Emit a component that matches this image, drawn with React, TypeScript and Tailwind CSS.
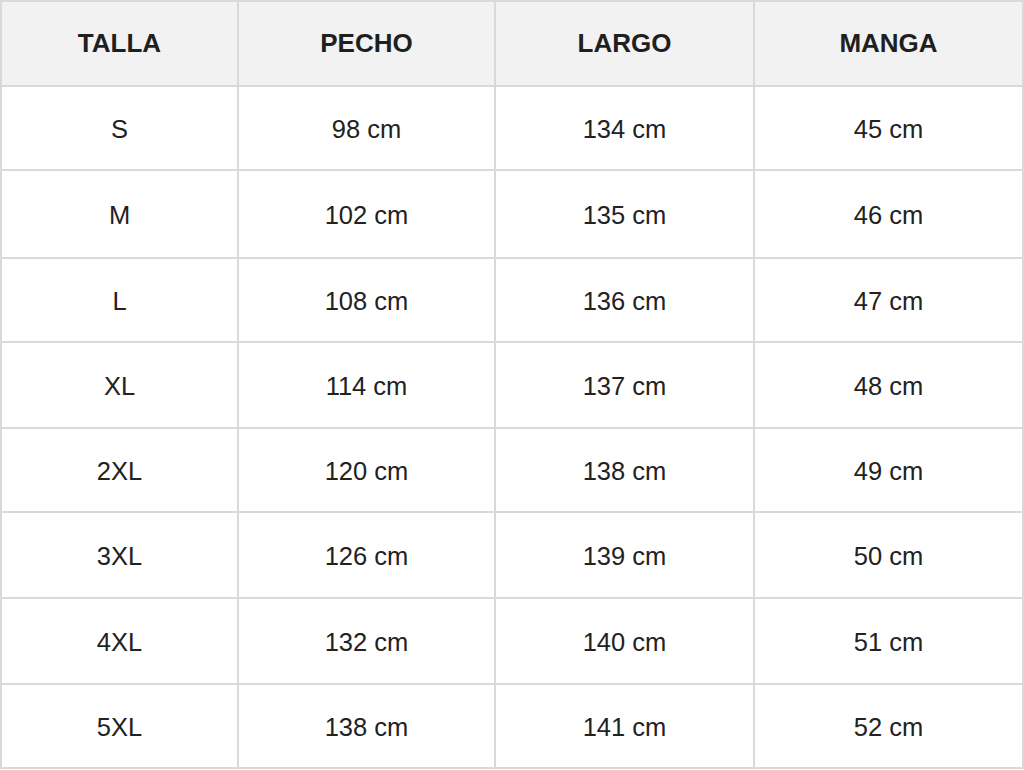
const headers = ['TALLA', 'PECHO', 'LARGO', 'MANGA']

const rows = [
  ['S', '98 cm', '134 cm', '45 cm'],
  ['M', '102 cm', '135 cm', '46 cm'],
  ['L', '108 cm', '136 cm', '47 cm'],
  ['XL', '114 cm', '137 cm', '48 cm'],
  ['2XL', '120 cm', '138 cm', '49 cm'],
  ['3XL', '126 cm', '139 cm', '50 cm'],
  ['4XL', '132 cm', '140 cm', '51 cm'],
  ['5XL', '138 cm', '141 cm', '52 cm'],
]

export default function App() {
  return (
    <div className="w-[1024px] h-[770px] bg-white" style={{ fontFamily: '"Liberation Sans", Arial, sans-serif' }}>
      <div className="grid w-[1024px] grid-cols-[235px_255px_257px_267px] grid-rows-[83px_82px_86px_82px_84px_82px_84px_84px_82px] gap-[2px] bg-[#d9d9d9] p-[2px] pr-0">
        {headers.map((h) => (
          <div key={h} className="flex items-center justify-center bg-[#f2f2f2] text-[26px] font-bold text-[#1f1f1f]">
            {h}
          </div>
        ))}
        {rows.map((r) =>
          r.map((c, i) => (
            <div key={r[0] + i} className="flex items-center justify-center bg-white pt-[2px] text-[25.5px] text-[#222]">
              {c}
            </div>
          ))
        )}
      </div>
    </div>
  )
}
